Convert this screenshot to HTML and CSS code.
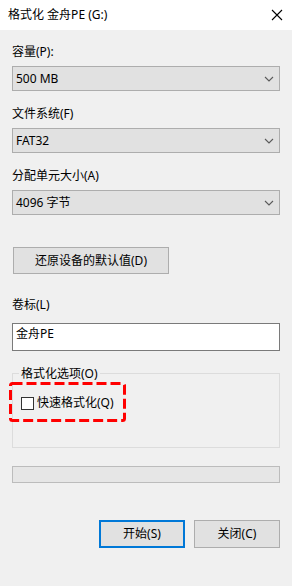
FILE: index.html
```html
<!DOCTYPE html>
<html lang="zh-CN">
<head>
<meta charset="utf-8">
<title>格式化 金舟PE (G:)</title>
<link rel="stylesheet" href="styles.css">
</head>
<body>
<div class="window">
  <div class="titlebar">
    <span class="title">格式化 金舟PE (G:)</span>
    <svg class="close-x" width="12" height="12" viewBox="0 0 12 12"><path d="M1 1 L11 11 M11 1 L1 11" stroke="#000" stroke-width="1.1" fill="none"/></svg>
  </div>
  <div class="content">
    <div class="label first">容量(P):</div>
    <div class="select"><span>500 MB</span><svg class="chev" width="10" height="6" viewBox="0 0 10 6"><path d="M1 1 L5 5 L9 1" stroke="#5a5a5a" stroke-width="1.1" fill="none"/></svg></div>

    <div class="label">文件系统(F)</div>
    <div class="select"><span>FAT32</span><svg class="chev" width="10" height="6" viewBox="0 0 10 6"><path d="M1 1 L5 5 L9 1" stroke="#5a5a5a" stroke-width="1.1" fill="none"/></svg></div>

    <div class="label">分配单元大小(A)</div>
    <div class="select"><span>4096 字节</span><svg class="chev" width="10" height="6" viewBox="0 0 10 6"><path d="M1 1 L5 5 L9 1" stroke="#5a5a5a" stroke-width="1.1" fill="none"/></svg></div>

    <button class="btn restore">还原设备的默认值(D)</button>

    <div class="label vol">卷标(L)</div>
    <div class="input">金舟PE</div>

    <div class="group">
      <span class="legend">格式化选项(O)</span>
      <div class="check-row"><span class="checkbox"></span><span>快速格式化(Q)</span></div>
    </div>

    <div class="progress"></div>

    <div class="actions">
      <button class="btn start">开始(S)</button>
      <button class="btn">关闭(C)</button>
    </div>
  </div>
  <svg class="annot" width="118" height="40" viewBox="0 0 118 40"><rect x="1.5" y="1.5" width="114" height="37" rx="2" ry="2" fill="none" stroke="#ff0000" stroke-width="3" stroke-dasharray="10 4"/></svg>
</div>
</body>
</html>
```

FILE: styles.css
```css
html, body {
  margin: 0;
  padding: 0;
  background: #f0f0f0;
}
body {
  font-family: "Noto Sans", "Noto Sans CJK SC", sans-serif;
  font-size: 12px;
  line-height: 16px;
  color: #000;
}
.window {
  position: relative;
  width: 292px;
  height: 586px;
  background: #f0f0f0;
  overflow: hidden;
}
.titlebar {
  height: 30px;
  background: #fff;
  display: flex;
  align-items: center;
  justify-content: space-between;
  padding: 0 9px 0 8px;
}
.title {
  font-size: 12px;
}
.close-x {
  margin-top: -1px;
}
.content {
  padding: 14px 12px 0 12px;
  display: flex;
  flex-direction: column;
}
.label {
  margin-top: 15px;
  margin-bottom: 6px;
  height: 16px;
}
.label.first {
  margin-top: 0;
}
.select {
  height: 25px;
  box-sizing: border-box;
  border: 1px solid #adadad;
  background: #e1e1e1;
  display: flex;
  align-items: center;
  justify-content: space-between;
  padding: 0 5px 0 3px;
}
.chev {
  display: block;
}
.btn {
  font-family: inherit;
  font-size: 12px;
  line-height: 16px;
  color: #000;
  background: #e1e1e1;
  border: 1px solid #adadad;
  border-radius: 0;
  padding: 0;
  margin: 0;
  box-sizing: border-box;
  height: 28px;
  width: 86px;
}
.restore {
  margin-top: 32px;
  margin-left: 1px;
  width: 156px;
  height: 27px;
  align-self: flex-start;
}
.label.vol {
  margin-top: 23px;
  margin-bottom: 10px;
}
.input {
  height: 28px;
  box-sizing: border-box;
  border: 1px solid #7a7a7a;
  background: #fff;
  padding: 2px 3px 0 3px;
}
.group {
  position: relative;
  margin-top: 22px;
  height: 75px;
  box-sizing: border-box;
  border: 1px solid #dcdcdc;
  padding: 21px 8px 0 8px;
}
.legend {
  position: absolute;
  top: -8px;
  left: 6px;
  padding: 0 2px;
  background: #f0f0f0;
}
.check-row {
  display: flex;
  align-items: center;
  gap: 3px;
}
.checkbox {
  width: 13px;
  height: 13px;
  box-sizing: border-box;
  border: 1px solid #333;
  background: #fff;
}
.progress {
  margin-top: 18px;
  height: 17px;
  box-sizing: border-box;
  border: 1px solid #bcbcbc;
  background: #e6e6e6;
}
.actions {
  margin-top: 37px;
  display: flex;
  justify-content: flex-end;
  gap: 9px;
}
.start {
  border: 2px solid #0078d7;
}
.annot {
  position: absolute;
  left: 9px;
  top: 382px;
}
```
